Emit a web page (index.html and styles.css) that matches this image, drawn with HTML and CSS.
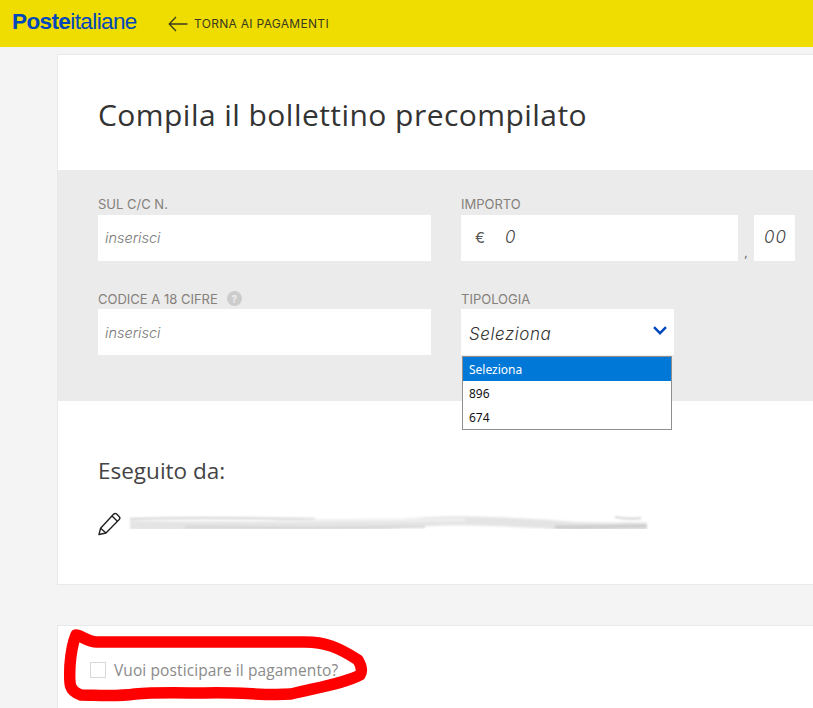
FILE: index.html
```html
<!DOCTYPE html>
<html lang="it">
<head>
    <meta charset="UTF-8">
    <meta name="viewport" content="width=device-width, initial-scale=1.0">
    <title>Compila il bollettino precompilato</title>
    <link rel="stylesheet" href="styles.css">
</head>
<body>
    <header class="topbar">
        <div class="logo"><b>Poste</b>italiane</div>
        <a class="back" href="#">
            <svg width="20" height="16" viewBox="0 0 20 16" fill="none" stroke="#3a3a20" stroke-width="1.3"><path d="M19.5 8H1.2M8 1L1.2 8 8 15"/></svg>
            <span>TORNA AI PAGAMENTI</span>
        </a>
    </header>

    <main class="page">
        <section class="card">
            <h1>Compila il bollettino precompilato</h1>

            <div class="band">
                <div class="field">
                    <label for="conto">SUL C/C N.</label>
                    <input type="text" id="conto" placeholder="inserisci">
                </div>
                <div class="field">
                    <label for="importo">IMPORTO</label>
                    <div class="amount">
                        <div class="amountMain"><span class="euro">€</span><input type="text" id="importo" placeholder="0"></div>
                        <span class="comma">,</span>
                        <input class="cents" type="text" placeholder="00">
                    </div>
                </div>
                <div class="field lower">
                    <label for="codice">CODICE A 18 CIFRE <span class="help">?</span></label>
                    <input type="text" id="codice" placeholder="inserisci">
                </div>
                <div class="field lower">
                    <label>TIPOLOGIA</label>
                    <div class="selectBox">
                        <span>Seleziona</span>
                        <svg width="14" height="9" viewBox="0 0 14 9" fill="none" stroke="#0047bb" stroke-width="2.4"><path d="M1 1.2l6 6 6-6"/></svg>
                        <ul class="dropdown">
                            <li class="active">Seleziona</li>
                            <li>896</li>
                            <li>674</li>
                        </ul>
                    </div>
                </div>
            </div>

            <div class="payer">
                <h2>Eseguito da:</h2>
                <div class="payerRow">
                    <svg width="25" height="25" viewBox="0 0 25 25" fill="none" stroke="#222" stroke-width="1.4" stroke-linejoin="round"><path d="M1 23.5l1.6-6.3L15.5 3.2c1-1 2.2-1 3.2-.1l2.4 2.3c1 1 1 2.1.1 3.1L8 22z"/><path d="M2.6 17.2L8 22M14 5l5.6 5.4"/></svg>
                    <svg class="smudge" width="525" height="24" viewBox="0 0 525 24" fill="none">
                        <defs><filter id="soft"><feGaussianBlur stdDeviation="1"/></filter></defs>
                        <g filter="url(#soft)">
                            <path d="M5 7C60 5 130 6 190 7" stroke="#c4c4c4" stroke-width="1.5"/>
                            <path d="M5 13C70 15 130 14 260 13C320 7 350 8 420 12C460 17 490 14 522 15" stroke="#e4e4e4" stroke-width="9"/>
                            <path d="M150 9C210 8 280 8 340 8" stroke="#f0f0f0" stroke-width="3"/>
                            <path d="M60 15C150 16 220 16 300 15" stroke="#cfcfcf" stroke-width="1.5"/>
                            <path d="M430 15C470 15 500 14 522 14" stroke="#cacaca" stroke-width="3"/>
                            <path d="M490 5C500 7 508 7 516 6" stroke="#aaa" stroke-width="1"/>
                        </g>
                    </svg>
                </div>
            </div>
        </section>

        <section class="card later">
            <label class="check"><span class="box"></span>Vuoi posticipare il pagamento?</label>
            <svg class="scribble" width="320" height="80" viewBox="0 0 320 80" fill="none" stroke="#ff0000" stroke-width="11.5" stroke-linecap="round" stroke-linejoin="round">
                <path d="M21 8C26 8 32 15 42 15L250 15C270 15 283 20 303 33C307 40 307 45 305 48C290 56 265 60 236 67C210 69 190 65 150 66C130 66 100 65 80 67C60 70 40 68 26 68C14 64 14 58 15 38C16 25 18 15 21 8Z"/>
            </svg>
        </section>
    </main>
</body>
</html>
```

FILE: styles.css
```css
* {
    box-sizing: border-box;
}

body {
    margin: 0;
    height: 708px;
    overflow: hidden;
    background: #f4f4f4;
    font-family: "Open Sans", sans-serif;
    color: #333;
}

.topbar {
    display: flex;
    align-items: center;
    height: 47px;
    padding-left: 12px;
    background: #efdc00;
}

.logo {
    width: 156px;
    margin-top: -4px;
    font-family: "Liberation Sans", sans-serif;
    font-size: 22.5px;
    letter-spacing: -0.6px;
    color: #0047bb;
}

.back {
    display: flex;
    align-items: center;
    gap: 6px;
    color: #3a3a20;
    font-family: Inter, sans-serif;
    font-size: 12px;
    letter-spacing: 0.3px;
    text-decoration: none;
}

.page {
    padding: 7px 0 0 57px;
}

.card {
    background: #fff;
    border: 1px solid #e9e9e9;
    border-right: none;
}

.card h1 {
    margin: 0;
    height: 115px;
    padding: 40px 0 0 40px;
    font-size: 30px;
    font-weight: 400;
    letter-spacing: 0.45px;
    line-height: 40px;
    color: #333;
}

.band {
    display: grid;
    grid-template-columns: 333px 334px;
    align-content: start;
    column-gap: 30px;
    row-gap: 23px;
    height: 231px;
    padding: 24px 0 0 40px;
    background: #ebebeb;
}

.field {
    display: flex;
    flex-direction: column;
    height: 71px;
}

.field label {
    display: flex;
    align-items: center;
    gap: 9px;
    height: 21px;
    padding-bottom: 2px;
    font-family: Inter, sans-serif;
    font-size: 13px;
    color: #85807a;
}

.lower label {
    padding-bottom: 0;
}

.field input {
    width: 100%;
    height: 46px;
    padding: 0 7px 2px;
    border: none;
    background: #fff;
    font-family: Inter, sans-serif;
    font-size: 14.5px;
    font-style: italic;
    font-weight: 300;
}

.lower input {
    padding-bottom: 0;
}

.field input::placeholder {
    color: #777;
    opacity: 1;
}

.help {
    display: flex;
    align-items: center;
    justify-content: center;
    width: 15px;
    height: 15px;
    border-radius: 50%;
    background: #ccc;
    color: #eee;
    font-size: 10px;
    font-weight: 700;
}

.amount {
    display: flex;
}

.amountMain {
    display: flex;
    align-items: center;
    width: 277px;
    height: 46px;
    padding-left: 14px;
    background: #fff;
}

.euro {
    width: 30px;
    margin-top: -1px;
    font-family: Inter, sans-serif;
    font-size: 15px;
    color: #555;
}

.field .amountMain input {
    flex: 1;
    padding: 0 0 2px;
    font-size: 17px;
    letter-spacing: 1px;
}

.field .amount input::placeholder {
    color: #444;
}

.comma {
    width: 16px;
    padding-top: 28px;
    text-align: center;
    font-size: 13px;
    color: #666;
}

.field .cents {
    width: 41px;
    padding: 0 0 2px 10px;
    font-size: 17px;
    letter-spacing: 1px;
}

.selectBox {
    position: relative;
    display: flex;
    align-items: center;
    justify-content: space-between;
    width: 213px;
    height: 46px;
    padding: 3px 7px 0 8px;
    background: #fff;
    font-family: Inter, sans-serif;
    font-size: 17px;
    font-style: italic;
    font-weight: 300;
    letter-spacing: 0.55px;
    color: #333;
}

.selectBox svg {
    margin-top: -6px;
}

.dropdown {
    position: absolute;
    top: 47px;
    left: 1px;
    width: 210px;
    margin: 0;
    padding: 0;
    list-style: none;
    border: 1px solid #8f8f8f;
    background: #fff;
    font-family: "Noto Sans", sans-serif;
    font-size: 12px;
    font-style: normal;
    font-weight: 400;
    letter-spacing: 0;
    color: #111;
}

.dropdown li {
    height: 24px;
    padding-left: 6px;
    line-height: 26px;
}

.dropdown .active {
    background: #0078d7;
    color: #fff;
}

.payer {
    height: 183px;
    padding: 56px 0 0 40px;
}

.payer h2 {
    margin: 0;
    font-size: 22.5px;
    font-weight: 400;
    line-height: 28px;
    color: #444;
}

.payerRow {
    display: flex;
    align-items: center;
    gap: 2px;
    margin-top: 26px;
}

.later {
    position: relative;
    height: 90px;
    margin-top: 40px;
    padding: 33px 0 0 32px;
}

.check {
    display: flex;
    align-items: center;
    gap: 8px;
    font-size: 15.5px;
    letter-spacing: 0.1px;
    color: #8a8a8a;
}

.box {
    width: 16px;
    height: 16px;
    border: 1px solid #d8d8d8;
    background: #fff;
}

.scribble {
    position: absolute;
    top: 1px;
    left: -3px;
}
```
